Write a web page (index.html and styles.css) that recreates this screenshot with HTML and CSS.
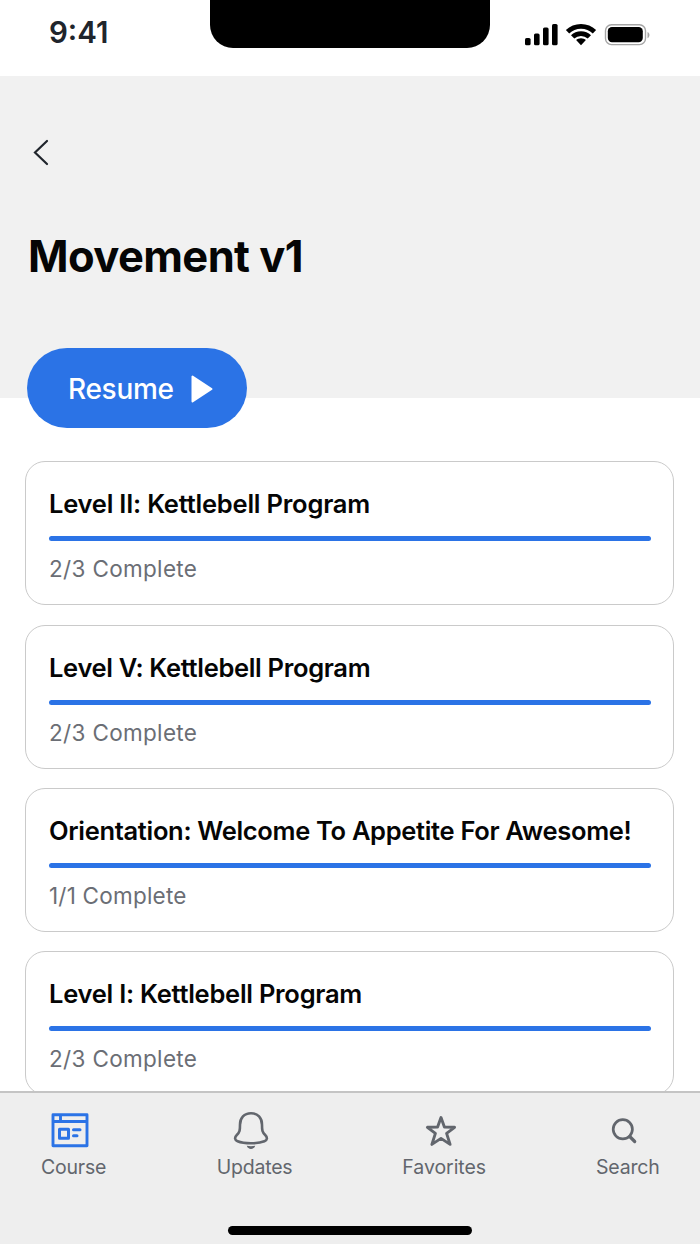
FILE: index.html
```html
<!DOCTYPE html>
<html lang="en">
<head>
<meta charset="utf-8">
<title>Movement v1</title>
<link rel="stylesheet" href="styles.css">
</head>
<body>
<div class="screen">
  <div class="status">
    <div class="time">9:41</div>
    <div class="notch"></div>
    <svg class="indicators" width="126" height="24" viewBox="0 0 126 24">
      <rect x="0" y="14" width="5.6" height="7.3" rx="1.6"/>
      <rect x="9" y="9.5" width="5.6" height="11.8" rx="1.6"/>
      <rect x="18" y="3.5" width="5.6" height="17.8" rx="1.6"/>
      <rect x="27" y="0" width="5.6" height="21.3" rx="1.6"/>
      <path d="M56 0c5.800 0 11.100 2.200 15.100 6l-3.300 3.500a17 17 0 0 0-23.600 0L40.900 6C44.900 2.200 50.200 0 56 0z"/>
      <path d="M56 7.200c3.900 0 7.400 1.500 10 4l-3.300 3.400a9.700 9.700 0 0 0-13.400 0L46 11.200c2.600-2.500 6.100-4 10-4z"/>
      <path d="M56 14.200c1.900 0 3.600.7 4.900 1.900L56 21.200l-4.900-5.100c1.300-1.200 3-1.900 4.900-1.900z"/>
      <rect class="battery-case" x="80.500" y=".8" width="40" height="19.800" rx="6"/>
      <rect x="82.800" y="3" width="35" height="15.200" rx="4.200"/>
      <path class="battery-tip" d="M122.500 8c2.600 1 2.600 5 0 6.200z"/>
    </svg>
  </div>
  <header class="hero">
    <svg class="back" width="16" height="27" viewBox="0 0 16 27"><path d="M14 2 2 13.500l12 11.500"/></svg>
    <h1 class="title">Movement v1</h1>
    <button class="resume"><span class="resume-label">Resume</span><svg width="22" height="28" viewBox="0 0 22 28"><path d="M1.500 1.500v25L20.500 14z"/></svg></button>
  </header>
  <main class="list">
    <section class="card"><h2 class="name n1">Level II: Kettlebell Program</h2><div class="bar"></div><p class="progress">2/3 Complete</p></section>
    <section class="card"><h2 class="name n2">Level V: Kettlebell Program</h2><div class="bar"></div><p class="progress">2/3 Complete</p></section>
    <section class="card"><h2 class="name n3">Orientation: Welcome To Appetite For Awesome!</h2><div class="bar"></div><p class="progress one">1/1 Complete</p></section>
    <section class="card"><h2 class="name n4">Level I: Kettlebell Program</h2><div class="bar"></div><p class="progress">2/3 Complete</p></section>
  </main>
  <nav class="tabs">
    <div class="tab course active">
      <svg width="40" height="40" viewBox="0 0 40 40"><path d="M3 3.700h34v31H3zM3 10.500h34M10.500 4v6.500" stroke-width="2.900" stroke-linejoin="round"/><path d="M9.500 18.300h9v9h-9z" stroke-width="3" stroke-linejoin="round"/><path d="M23.500 18.700h6.500M23.500 24.700h3.500" stroke-width="3" stroke-linecap="round"/></svg>
      <span>Course</span>
    </div>
    <div class="tab updates">
      <svg width="40" height="40" viewBox="0 0 40 40"><path d="M20 2.200c-6.800 0-11 4.800-11 11.500 0 5.800-.2 7.500-3.200 10.300-2.500 2.400-2.200 5 .8 6.300 3.400 1.400 8 2 13.400 2s10-.6 13.400-2c3-1.300 3.300-3.900.8-6.300-3-2.800-3.200-4.500-3.200-10.300 0-6.700-4.200-11.500-11-11.500z" stroke-width="2.600"/><path class="solid" d="M15.800 34.800q4.200.7 8.400 0c-1 4.200-7.400 4.200-8.400 0z"/></svg>
      <span>Updates</span>
    </div>
    <div class="tab favorites">
      <svg width="40" height="40" viewBox="0 0 40 40"><path d="M20 6.500l3.400 9.500 10.200.3-8 6.100 3.500 11-9.100-6-9.100 6 3.500-11-8-6.100 10.200-.3z" stroke-width="2.900" stroke-linejoin="round"/></svg>
      <span>Favorites</span>
    </div>
    <div class="tab search">
      <svg width="40" height="40" viewBox="0 0 40 40"><circle cx="18.800" cy="18.300" r="9.600" stroke-width="2.700"/><path d="M25.700 25.500l5 5" stroke-width="3.200" stroke-linecap="round"/></svg>
      <span>Search</span>
    </div>
    <div class="home"></div>
  </nav>
</div>
</body>
</html>
```
FILE: styles.css
```css
* { box-sizing: border-box; }
body { margin: 0; font-family: Inter, sans-serif; background: #fff; }
h1, h2, p { margin: 0; white-space: nowrap; }
.screen { width: 700px; height: 1244px; display: flex; flex-direction: column; overflow: hidden; position: relative; }

.status { height: 76px; flex: none; display: grid; grid-template-columns: 210px 280px 210px; align-items: start; }
.time { padding: 14px 0 0 49px; font-size: 29.500px; line-height: 36px; font-weight: 600; color: #20252c; }
.notch { height: 48px; background: #000; border-radius: 0 0 23px 23px; }
.indicators { margin: 24px 0 0 35px; }
.battery-case { fill: none; stroke: #a5a5a5; stroke-width: 1.400; }
.battery-tip { fill: #a5a5a5; }

.hero { height: 322px; flex: none; background: #f1f1f1; display: flex; flex-direction: column; align-items: flex-start; padding: 63px 27px 0; }
.back { flex: none; margin-left: 6px; fill: none; stroke: #20252c; stroke-width: 2.200; stroke-linecap: round; }
.title { margin-top: 63px; padding-left: 1px; font-size: 43.500px; line-height: 54px; font-weight: 700; letter-spacing: -.600px; color: #050505; }
.resume { margin-top: 65px; flex: none; width: 220px; height: 80px; border: 0; border-radius: 40px; background: #2b73e6; color: #fff; display: flex; align-items: center; gap: 17px; padding: 2px 0 0 41px; font: 500 28px/36px Inter, sans-serif; }
.resume-label { width: 106px; white-space: nowrap; text-align: left; letter-spacing: -.300px; }
.resume svg { fill: #fff; stroke: #fff; stroke-width: 2; stroke-linejoin: round; }

.list { flex: 1; min-height: 0; overflow: hidden; padding: 63.200px 26px 0 25px; display: flex; flex-direction: column; gap: 19.400px; }
.card { flex: none; height: 144px; border: 1px solid #cacaca; border-radius: 20px; padding: 26px 22px 0 23px; background: #fff; }
.name { font-size: 25.500px; line-height: 32px; font-weight: 600; color: #050505; }
.n1 { letter-spacing: -.220px; }
.n2 { letter-spacing: -.320px; }
.n3 { letter-spacing: -.320px; }
.n4 { letter-spacing: -.260px; }
.bar { height: 5px; margin-top: 16px; border-radius: 2.500px; background: #2b73e6; }
.progress { margin-top: 14px; font-size: 22.500px; line-height: 28px; letter-spacing: .330px; color: #6b6e75; }
.one { letter-spacing: .220px; }

.tabs { height: 153px; flex: none; background: #eee; border-top: 2px solid #c4c4c4; display: grid; grid-template-columns: 65px 75px 83px 63px; justify-content: space-between; align-content: start; padding: 18px 41px 0; position: relative; }
.tab { display: flex; flex-direction: column; align-items: flex-start; color: #62666d; font-size: 19.500px; line-height: 26px; letter-spacing: -.200px; white-space: nowrap; }
.favorites { letter-spacing: -.050px; }
.tab svg { fill: none; stroke: currentColor; align-self: center; margin-right: 6px; }
.tab span { margin-top: 3px; }
.course svg { margin-right: 7px; }
.tab .solid { fill: currentColor; stroke: none; }
.active svg { color: #2b73e6; }
.home { position: absolute; left: 228px; bottom: 9px; width: 244px; height: 9px; border-radius: 5px; background: #000; }
```
